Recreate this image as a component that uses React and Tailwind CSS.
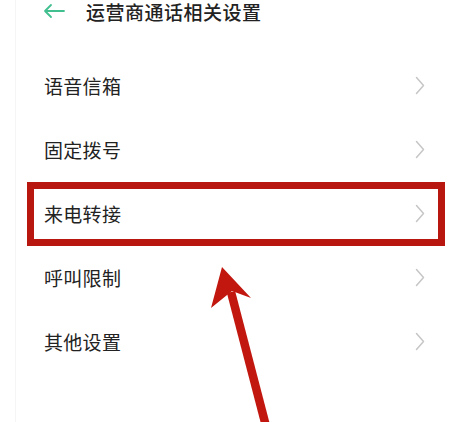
import React from 'react';

const items = ['语音信箱', '固定拨号', '来电转接', '呼叫限制', '其他设置'];

const Chevron = () => (
  <svg width="10" height="19" viewBox="0 0 10 19" fill="none">
    <path d="M1.5 1.5L8.5 9.5L1.5 17.5" stroke="#c6c6c6" strokeWidth="1.5" strokeLinecap="round" strokeLinejoin="round" />
  </svg>
);

export default function App() {
  return (
    <div
      className="relative w-[475px] h-[422px] overflow-hidden bg-white text-[#222]"
      style={{ fontFamily: '"Noto Sans CJK SC", "Noto Sans", sans-serif' }}
    >
      <div className="ml-[15px] h-full border-l border-[#f5f5f5]">
        {/* header */}
        <div className="flex items-center h-[22px] pl-[27px]">
          <svg width="22" height="16" viewBox="0 0 22 16" fill="none">
            <path d="M21 8H2M8 2L2 8L8 14" stroke="#41bf8e" strokeWidth="1.8" strokeLinecap="round" strokeLinejoin="round" />
          </svg>
          <span className="ml-[21px] text-[19px] font-medium leading-none tracking-[0.5px]">运营商通话相关设置</span>
        </div>

        {/* list */}
        <div className="mt-[32px] pl-[11px] pr-[30px]">
          {items.map((label, i) => (
            <div
              key={label}
              className={`flex items-center justify-between h-[64px] pl-[10px] pr-[13px] pb-[2px] border-[7px] ${
                i === 2 ? 'border-[#b8170f]' : 'border-transparent'
              }`}
            >
              <span className="text-[19px] leading-none tracking-[0.3px]">{label}</span>
              <Chevron />
            </div>
          ))}
        </div>
      </div>

      {/* annotation arrow */}
      <svg className="absolute inset-0 pointer-events-none" width="475" height="422" viewBox="0 0 475 422">
        <path d="M231 292L267 430" stroke="#c2170f" strokeWidth="8.5" strokeLinecap="butt" />
        <path d="M222 267L251 298L232 291L211 308Z" fill="#c2170f" />
      </svg>
    </div>
  );
}
